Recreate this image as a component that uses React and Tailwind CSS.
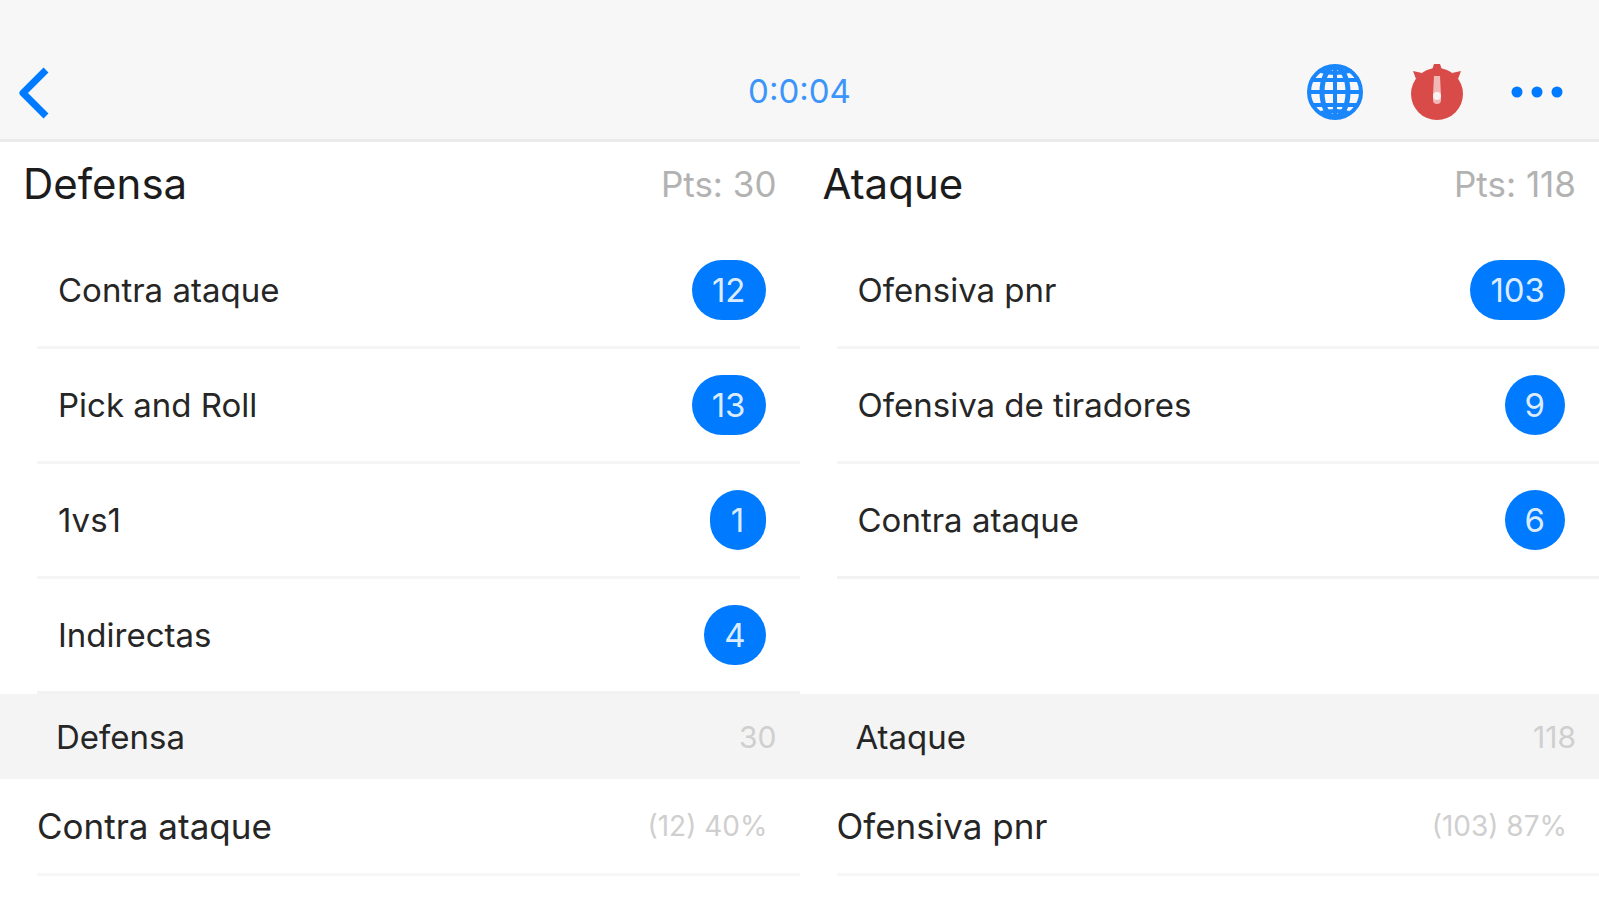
const columnas = [
  {
    titulo: 'Defensa',
    puntos: 30,
    jugadas: [
      { nombre: 'Contra ataque', total: 12 },
      { nombre: 'Pick and Roll', total: 13 },
      { nombre: '1vs1', total: 1 },
      { nombre: 'Indirectas', total: 4 },
    ],
    resumen: [{ nombre: 'Contra ataque', detalle: '(12) 40%' }],
  },
  {
    titulo: 'Ataque',
    puntos: 118,
    jugadas: [
      { nombre: 'Ofensiva pnr', total: 103 },
      { nombre: 'Ofensiva de tiradores', total: 9 },
      { nombre: 'Contra ataque', total: 6 },
    ],
    resumen: [{ nombre: 'Ofensiva pnr', detalle: '(103) 87%' }],
  },
]

function IconoVolver() {
  return (
    <svg width="32" height="56" viewBox="0 0 32 56" fill="none" stroke="#007aff" strokeWidth="7" strokeLinejoin="round">
      <path d="M28 5 L5 28 L28 51" />
    </svg>
  )
}

function IconoGlobo() {
  return (
    <svg width="56" height="56" viewBox="0 0 56 56" fill="none" stroke="#1a86fb" strokeWidth="4">
      <circle cx="28" cy="28" r="26" />
      <ellipse cx="28" cy="28" rx="13" ry="25" strokeWidth="5" />
      <path d="M28 2 V54" />
      <path d="M2 28 H54" />
      <path d="M6 16 H50 M6 41 H50" />
      <path d="M14 7 Q28 11 42 7 M14 49 Q28 45 42 49" />
    </svg>
  )
}

function IconoCronometro() {
  return (
    <svg width="56" height="58" viewBox="0 0 56 58" fill="#d94b48">
      <circle cx="28" cy="31" r="26" />
      <path d="M25 1 H31 L33 7 H23 Z" />
      <path d="M4 8 L13 10 L7 16 Z" />
      <path d="M52 8 L43 10 L49 16 Z" />
      <path d="M25 13 H31 L32 33 V37 Q32 41 28 41 Q24 41 24 37 V33 Z" fill="#f0b9b8" />
      <circle cx="28" cy="33" r="4" fill="#f9f3f3" />
    </svg>
  )
}

function IconoMas() {
  return (
    <svg width="52" height="12" viewBox="0 0 52 12" fill="#007aff">
      <circle cx="6" cy="6" r="5.5" />
      <circle cx="26" cy="6" r="5.5" />
      <circle cx="46" cy="6" r="5.5" />
    </svg>
  )
}

function Jugada({ nombre, total }) {
  return (
    <li className="ml-[37px] flex h-[115px] items-center justify-between border-b-3 border-[#f5f5f5] pl-[21px] pr-[34px] last:border-[#f2f2f2]">
      <span>{nombre}</span>
      <span className="flex h-[60px] min-w-[56px] items-center justify-center rounded-full bg-[#007aff] px-5 text-[#dcecff]">
        {total}
      </span>
    </li>
  )
}

export default function App() {
  return (
    <div className="min-h-screen bg-white font-['Inter',sans-serif] text-[33px] leading-10 text-[#262626]">
      <header className="grid h-[142px] grid-cols-3 items-end border-b-3 border-[#ebebeb] bg-[#f7f7f7] pb-[18px]">
        <button type="button" aria-label="Volver" className="ml-[18px] flex h-[56px] w-[32px] items-center">
          <IconoVolver />
        </button>
        <time className="flex h-[60px] items-center justify-center text-[#3b95fa]">0:0:04</time>
        <div className="mr-[36px] flex h-[58px] items-center justify-end gap-[46px]">
          <button type="button" aria-label="Web"><IconoGlobo /></button>
          <button type="button" aria-label="Cronómetro"><IconoCronometro /></button>
          <button type="button" aria-label="Más opciones"><IconoMas /></button>
        </div>
      </header>

      <main className="grid grid-cols-2">
        {columnas.map(({ titulo, puntos, jugadas, resumen }) => (
          <section key={titulo} className="flex flex-col">
            <div className="flex h-[84px] items-center justify-between pl-[23px] pr-[23px]">
              <h2 className="text-[42px] text-[#1c1c1c]">{titulo}</h2>
              <span className="text-[35px] text-[#b2b2b2]">Pts: {puntos}</span>
            </div>

            <ul className="grow pt-2">
              {jugadas.map(jugada => <Jugada key={jugada.nombre} {...jugada} />)}
            </ul>

            <div className="flex h-[85px] items-center justify-between bg-[#f4f4f4] pl-[56px] pr-[23px]">
              <h3>{titulo}</h3>
              <span className="text-[30px] text-[#cfcfcf]">{puntos}</span>
            </div>

            <ul>
              {resumen.map(({ nombre, detalle }) => (
                <li key={nombre} className="ml-[37px] flex h-[97px] items-center justify-between border-b-3 border-[#f7f7f7] pr-[32px]">
                  <span className="text-[35px]">{nombre}</span>
                  <span className="text-[28px] text-[#cfcfcf]">{detalle}</span>
                </li>
              ))}
            </ul>
          </section>
        ))}
      </main>
    </div>
  )
}
